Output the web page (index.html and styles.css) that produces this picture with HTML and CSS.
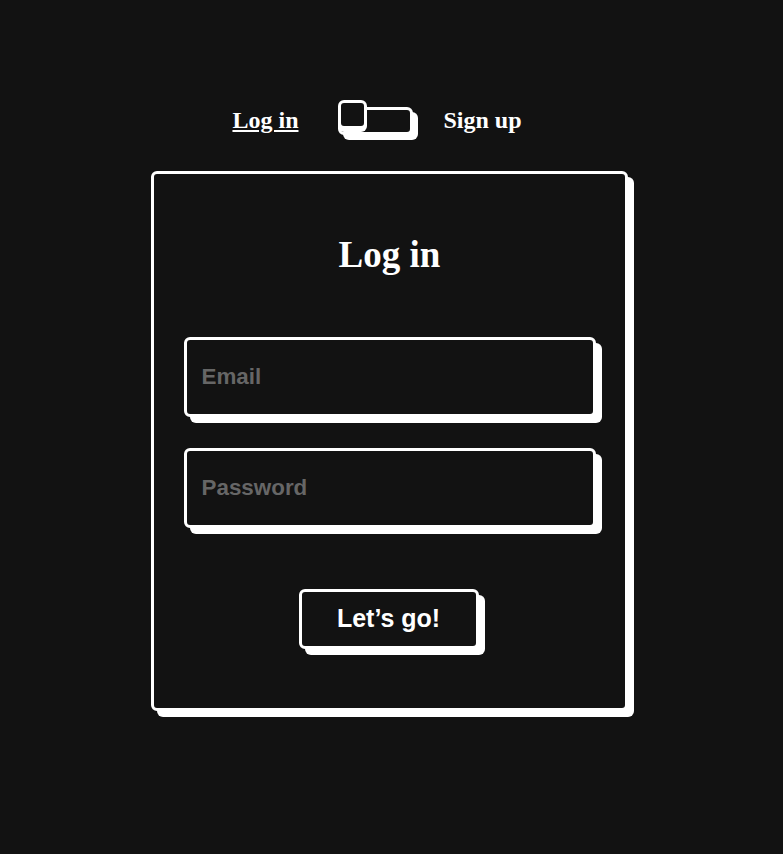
FILE: index.html
```html
<!DOCTYPE html>
<html lang="en">
<head>
<meta charset="utf-8">
<title>Log in</title>
<link rel="stylesheet" href="styles.css">
</head>
<body>
<div class="page">
  <div class="switch-row">
    <span class="switch-label active">Log in</span>
    <span class="slider"><span class="knob"></span></span>
    <span class="switch-label">Sign up</span>
  </div>
  <form class="card">
    <h1 class="title">Log in</h1>
    <input class="field" type="email" placeholder="Email">
    <input class="field" type="password" placeholder="Password">
    <button class="btn" type="button">Let’s go!</button>
  </form>
</div>
</body>
</html>
```
FILE: styles.css
```css
html, body {
  margin: 0;
  padding: 0;
  background: #121212;
}
.page {
  display: flex;
  flex-direction: column;
  align-items: center;
  min-height: 854px;
  box-sizing: border-box;
  padding-top: 107px;
}
.switch-row {
  display: flex;
  align-items: center;
  height: 28px;
  padding-right: 29px;
}
.switch-label {
  font-family: "Liberation Serif", "Times New Roman", serif;
  font-weight: 700;
  font-size: 24px;
  line-height: 24px;
  color: #fff;
  margin-top: -2px;
}
.switch-label.active {
  text-decoration: underline;
  margin-right: 40px;
}
.slider {
  position: relative;
  width: 75px;
  height: 28px;
  box-sizing: border-box;
  border: 3px solid #fff;
  border-radius: 6px;
  background: #121212;
  box-shadow: 5px 5px 0 #fff;
  margin-right: 30px;
}
.knob {
  position: absolute;
  left: -3px;
  top: -10px;
  width: 29px;
  height: 29px;
  box-sizing: border-box;
  border: 3px solid #fff;
  border-radius: 6px;
  background: #121212;
  box-shadow: 0 3px 0 #fff;
}
.card {
  margin: 36px 4px 0 0;
  width: 477px;
  box-sizing: border-box;
  border: 3px solid #fff;
  border-radius: 6px;
  box-shadow: 6px 6px 0 #fff;
  background: #121212;
  display: flex;
  flex-direction: column;
  align-items: center;
  padding: 0 0 59px;
}
.title {
  margin: 63px 0 0;
  font-family: "Liberation Serif", "Times New Roman", serif;
  font-weight: 700;
  font-size: 37px;
  line-height: 36px;
  color: #fff;
}
.field {
  width: 412px;
  height: 80px;
  box-sizing: border-box;
  border: 3px solid #fff;
  border-radius: 6px;
  background: #121212;
  box-shadow: 6px 6px 0 #fff;
  padding: 0 15px;
  font-family: "Liberation Sans", Arial, sans-serif;
  font-weight: 700;
  font-size: 22.4px;
  color: #fff;
  outline: none;
  margin-top: 64px;
}
.field + .field {
  margin-top: 31px;
}
.field::placeholder {
  color: #666;
  opacity: 1;
}
.btn {
  margin-top: 61px;
  margin-right: 2px;
  width: 180px;
  height: 60px;
  box-sizing: border-box;
  border: 3px solid #fff;
  border-radius: 6px;
  background: #121212;
  box-shadow: 6px 6px 0 #fff;
  font-family: "Liberation Sans", Arial, sans-serif;
  font-weight: 700;
  font-size: 25px;
  color: #fff;
  cursor: pointer;
  padding: 0 0 2px;
}
```
